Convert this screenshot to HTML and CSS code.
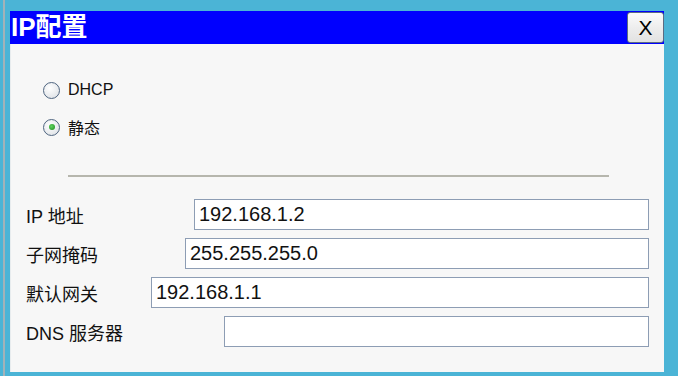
FILE: index.html
```html
<!DOCTYPE html>
<html lang="zh">
<head>
<meta charset="utf-8">
<title>IP配置</title>
<link rel="stylesheet" href="styles.css">
</head>
<body>
<div class="screen">
  <div class="dialog">
    <div class="titlebar">
      <span class="title">IP配置</span>
      <button class="close" type="button">X</button>
    </div>
    <div class="content">
      <div class="radios">
        <label class="radio"><span class="dot"></span><span>DHCP</span></label>
        <label class="radio checked"><span class="dot"></span><span>静态</span></label>
      </div>
      <div class="sep"></div>
      <div class="fields">
        <div class="row"><span class="lbl">IP 地址</span><div class="inp w1">192.168.1.2</div></div>
        <div class="row"><span class="lbl">子网掩码</span><div class="inp w2">255.255.255.0</div></div>
        <div class="row"><span class="lbl">默认网关</span><div class="inp w3">192.168.1.1</div></div>
        <div class="row"><span class="lbl">DNS 服务器</span><div class="inp w4"></div></div>
      </div>
    </div>
  </div>
</div>
</body>
</html>
```
FILE: styles.css
```css
html, body {
  margin: 0;
  padding: 0;
}
body {
  width: 678px;
  height: 376px;
  overflow: hidden;
  background: #4bb4d6;
  font-family: "Liberation Sans", "Noto Sans CJK SC", sans-serif;
}
.screen {
  margin-left: 3px;
  border-left: 2px solid #a3b2b8;
  padding: 11px 0 0 5px;
  height: 365px;
}
.dialog {
  width: 654px;
  height: 361px;
  display: flex;
  flex-direction: column;
}
.titlebar {
  height: 33px;
  background: #0000ff;
  display: flex;
  align-items: flex-start;
  justify-content: space-between;
}
.title {
  color: #fff;
  font-weight: bold;
  font-size: 26px;
  line-height: 33px;
  padding-left: 1px;
  font-family: "Liberation Sans", "Noto Sans CJK SC", sans-serif;
}
.close {
  margin-top: 1px;
  width: 37px;
  height: 31px;
  border: 1px solid #5b6b82;
  border-radius: 3px;
  background: linear-gradient(#fbfbfb, #ececec 55%, #e2e2e2);
  font-family: "Liberation Sans", sans-serif;
  font-size: 21px;
  color: #000;
  padding: 0;
  line-height: 29px;
}
.content {
  flex: 1;
  background: #f7f7f7;
  border-left: 1px solid #e8ecee;
  padding: 36px 15px 0 15px;
}
.radios {
  display: flex;
  flex-direction: column;
  gap: 17px;
  padding-left: 17px;
}
.radio {
  display: flex;
  align-items: center;
  height: 20px;
  font-size: 16px;
  color: #111;
}
.dot {
  width: 15px;
  height: 15px;
  border: 1px solid #4f6580;
  border-radius: 50%;
  background: radial-gradient(circle at 40% 35%, #ffffff, #d9dde2);
  margin-right: 8px;
  display: flex;
  align-items: center;
  justify-content: center;
}
.checked .dot::after {
  content: "";
  width: 6px;
  height: 6px;
  border-radius: 50%;
  background: radial-gradient(circle at 40% 40%, #5fd35f, #1e8a1e);
}
.sep {
  margin: 38px 0 0 42px;
  width: 541px;
  height: 2px;
  background: #b6b6ad;
}
.fields {
  margin-top: 22px;
  display: flex;
  flex-direction: column;
  gap: 8px;
}
.row {
  display: flex;
  align-items: center;
  height: 31px;
}
.lbl {
  font-size: 18px;
  color: #111;
  white-space: nowrap;
}
.inp {
  margin-left: auto;
  height: 29px;
  border: 1px solid #8d9db4;
  background: #fff;
  box-sizing: content-box;
  font-size: 20px;
  line-height: 29px;
  padding-left: 4px;
  color: #111;
}
.w1 { width: 449px; }
.w2 { width: 458px; }
.w3 { width: 492px; }
.w4 { width: 419px; }
```
